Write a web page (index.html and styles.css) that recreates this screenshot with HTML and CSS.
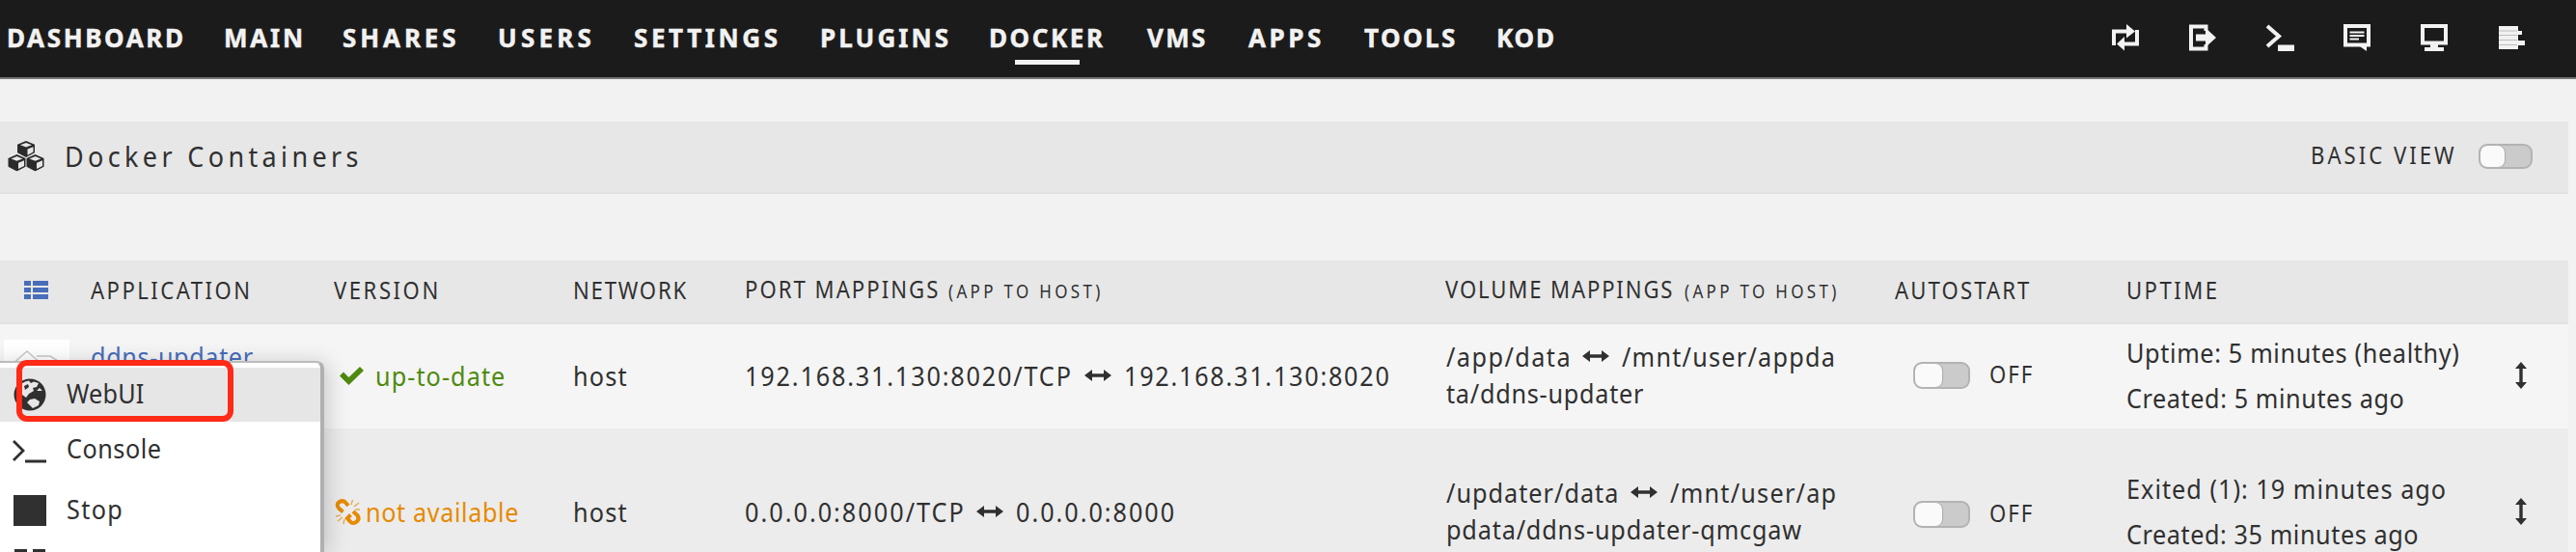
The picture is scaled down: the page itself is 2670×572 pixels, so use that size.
FILE: index.html
```html
<!DOCTYPE html>
<html lang="en">
<head>
<meta charset="utf-8">
<title>Docker</title>
<link rel="stylesheet" href="styles.css">
</head>
<body>
<svg class="defs" aria-hidden="true">
  <symbol id="lr" viewBox="0 0 28 12"><path d="M0 6L8 0V4.300H20V0L28 6L20 12V7.700H8V12Z"/></symbol>
  <symbol id="ud" viewBox="0 0 12 28"><path d="M6 0L12 7H7.700V21H12L6 28L0 21H4.300V7H0Z"/></symbol>
  <symbol id="cube" viewBox="0 0 19 18" preserveAspectRatio="none"><path d="M9.500 0L18.500 4V13L9.500 18L.5 13V4Z" fill="#2a2a2a"/><path d="M9.500 2L15.500 4.500L9.500 7L3.500 4.500Z" fill="#e7e7e7"/><path d="M11 9L17 6.500V12.300L11 15.500Z" fill="#e7e7e7"/></symbol>
</svg>

<header class="nav">
  <nav class="nav-links">
    <a class="n-dashboard">DASHBOARD</a><a class="n-main">MAIN</a><a class="n-shares">SHARES</a><a class="n-users">USERS</a><a class="n-settings">SETTINGS</a><a class="n-plugins">PLUGINS</a><a class="n-docker active">DOCKER</a><a class="n-vms">VMS</a><a class="n-apps">APPS</a><a class="n-tools">TOOLS</a><a class="n-kod">KOD</a>
  </nav>
  <div class="nav-icons">
    <svg viewBox="0 0 30 30"><g fill="none" stroke="#f2f2f2" stroke-width="4"><path d="M3 23V8.500H18"/><path d="M27 7V21.500H12"/></g><path d="M16 1L25 8.500L16 15.500ZM14 14V28.500L6 21.500Z" fill="#f2f2f2"/></svg>
    <svg viewBox="0 0 30 30"><path d="M18.500 8V3.500H3V26.500H18.500V22" fill="none" stroke="#f2f2f2" stroke-width="4"/><path d="M8 11.500H18V5L29 15L18 25V18.500H8Z" fill="#f2f2f2"/></svg>
    <svg viewBox="0 0 30 30"><path d="M2 3L14 13.500L2 24" fill="none" stroke="#f2f2f2" stroke-width="4"/><path d="M13 22.500H30V29H13Z" fill="#f2f2f2"/></svg>
    <svg viewBox="0 0 30 30"><path d="M3 3H27V22.500H3Z" fill="none" stroke="#f2f2f2" stroke-width="4"/><path d="M15 22H25V29Z" fill="#f2f2f2"/><path d="M7.500 9.500H22.500M7.500 13H22.500M7.500 16.500H17" fill="none" stroke="#f2f2f2" stroke-width="2"/></svg>
    <svg viewBox="0 0 30 30"><path d="M3 3H27V20.500H3Z" fill="none" stroke="#f2f2f2" stroke-width="4"/><path d="M11 22H19V25H25V29H5V25H11Z" fill="#f2f2f2"/></svg>
    <svg viewBox="0 0 30 30"><path d="M2 3H22V8H26V12H22V18H29V23H22V27H2Z" fill="#f2f2f2"/><path d="M2 8H21M2 12.500H21M2 17.500H21M2 22.500H21" stroke="#bdbdbd" stroke-width="1"/></svg>
  </div>
</header>

<main class="content">
  <section class="titlebar">
    <svg class="cubes" viewBox="0 0 38 32"><use href="#cube" x="9.500" y="0" width="19" height="17"/><use href="#cube" x="0" y="14" width="19" height="17.500"/><use href="#cube" x="19" y="14" width="19" height="17.500"/></svg>
    <h1 class="title">Docker Containers</h1>
    <div class="view"><span class="view-label">BASIC VIEW</span><span class="toggle view-toggle"></span></div>
  </section>

  <section class="table">
    <div class="row head">
      <div class="c-icon"><svg class="list" viewBox="0 0 25 19"><path d="M0 0H7V5H0ZM9 0H25V5H9ZM0 7H7V12H0ZM9 7H25V12H9ZM0 14H7V19H0ZM9 14H25V19H9Z" fill="#486dba"/></svg></div>
      <div class="h-app">APPLICATION</div>
      <div class="h-version">VERSION</div>
      <div class="h-network">NETWORK</div>
      <div class="h-pair"><span class="h-port">PORT MAPPINGS</span><small>(APP TO HOST)</small></div>
      <div class="h-pair"><span class="h-volume">VOLUME MAPPINGS</span><small>(APP TO HOST)</small></div>
      <div class="h-auto">AUTOSTART</div>
      <div class="h-uptime">UPTIME</div>
      <div></div>
    </div>

    <div class="row first">
      <div class="c-icon c-thumb"><svg class="thumb" viewBox="0 0 68 68"><path d="M0 0H68V68H0Z" fill="#fff"/><path d="M8 26L24 12L40 26M34 17H48L56 22" fill="none" stroke="#c9c9c9" stroke-width="1.500"/></svg></div>
      <div class="c-name">ddns-updater</div>
      <div class="ok"><svg class="check" viewBox="0 0 25 19"><path d="M0 9.500L4 5.500L9.500 11L21 0L25 4L9.500 19Z" fill="#4f8a10"/></svg><span class="t-ok">up-to-date</span></div>
      <div class="t-host">host</div>
      <div class="map"><span class="t-port1">192.168.31.130:8020/TCP</span><svg class="lr"><use href="#lr"/></svg><span class="t-port2">192.168.31.130:8020</span></div>
      <div class="vol"><div class="map"><span class="t-v1">/app/data</span><svg class="lr"><use href="#lr"/></svg><span class="t-v2">/mnt/user/appda</span></div><div class="t-v3">ta/ddns-updater</div></div>
      <div class="auto"><span class="toggle"></span><span class="off">OFF</span></div>
      <div class="up"><div class="t-u1">Uptime: 5 minutes (healthy)</div><div class="t-u2">Created: 5 minutes ago</div></div>
      <div class="move"><svg class="ud"><use href="#ud"/></svg></div>
    </div>

    <div class="row second">
      <div class="c-icon"></div>
      <div></div>
      <div class="warn"><svg class="chain" viewBox="0 0 27 27"><g fill="none" stroke="#e68a00" stroke-width="4"><path d="M8.500 13.500L4 9.500C0 5 6 .5 10.500 3L14 7"/><path d="M19 13L23.500 17C27 22 20.500 27 16.500 24L13 20L16.500 16.500"/></g><path d="M17 6L18.500 1M20 8L25 4M21 11H26M6 17L1 18M8 19L3 23M10 21L9 26" stroke="#e68a00" stroke-width="1.400" opacity=".65"/></svg><span class="t-warn">not available</span></div>
      <div class="t-host">host</div>
      <div class="map"><span class="t-port3">0.0.0.0:8000/TCP</span><svg class="lr"><use href="#lr"/></svg><span class="t-port4">0.0.0.0:8000</span></div>
      <div class="vol"><div class="map"><span class="t-v4">/updater/data</span><svg class="lr"><use href="#lr"/></svg><span class="t-v5">/mnt/user/ap</span></div><div class="t-v6">pdata/ddns-updater-qmcgaw</div></div>
      <div class="auto"><span class="toggle"></span><span class="off">OFF</span></div>
      <div class="up"><div class="t-u3">Exited (1): 19 minutes ago</div><div class="t-u4">Created: 35 minutes ago</div></div>
      <div class="move"><svg class="ud"><use href="#ud"/></svg></div>
    </div>
  </section>
</main>

<div class="menu">
  <div class="item current"><svg viewBox="0 0 34 34"><circle cx="17" cy="17" r="16.500" fill="#303030"/><path d="M5 10C8 5 12 3 16 2.500L18 5L21 3.500L26 5L24 9L20 10L21 13L16 16L13 20L9 17L5 16ZM17 22L22 21L27 24L26 28L20 31L17 28L14 25ZM24 13L27 10L30 13Z" fill="#e6e6e6"/><path d="M11 8L15 6L16 9L12 12Z" fill="#303030"/></svg><span class="m-web">WebUI</span></div>
  <div class="item console"><svg viewBox="0 0 34 34"><path d="M0 6L10 16L0 26" fill="none" stroke="#303030" stroke-width="2.800"/><path d="M12 27H34" stroke="#303030" stroke-width="3"/></svg><span class="m-con">Console</span></div>
  <div class="item stop"><svg viewBox="0 0 34 34"><path d="M0 1H34V33H0Z" fill="#303030"/></svg><span class="m-stop">Stop</span></div>
  <div class="item pause"><svg viewBox="0 0 34 34"><path d="M1 0H14V34H1ZM20 0H33V34H20Z" fill="#303030"/></svg></div>
</div>
<div class="marker"></div>
</body>
</html>
```
FILE: styles.css
```css
* { box-sizing: border-box; }
body {
  margin: 0;
  height: 572px;
  overflow: hidden;
  position: relative;
  background: #f2f2f2;
  color: #303030;
  font: 28px/38px "Noto Sans", "Open Sans", sans-serif;
  white-space: nowrap;
}
.defs { display: none; }
svg { display: block; flex: none; overflow: visible; }
.lr, .ud { fill: #303030; }

/* Condensed lettering */
.c-name, .t-host, .t-ok, .t-warn, .map span, .t-v3, .t-v6,
.up div, .item span {
  display: block;
  transform: scaleX(.9);
  transform-origin: 0 50%;
}
.view-label, .off, .h-app, .h-version, .h-network, .h-pair span,
.h-pair small, .h-auto, .h-uptime {
  display: block;
  transform: scaleX(.85);
  transform-origin: 0 50%;
}

.nav {
  display: flex;
  justify-content: space-between;
  height: 82px;
  background: #1c1b1b;
  border-bottom: 2px solid #787676;
  color: #f2f2f2;
  font-size: 26px;
  font-weight: 700;
  -webkit-text-stroke: .5px #f2f2f2;
}
.nav-links { display: flex; padding: 20px 0 0 7px; }
.nav-links a { display: block; }
.n-dashboard { width: 225px; letter-spacing: 2.610px; }
.n-main { width: 123px; letter-spacing: 2.790px; }
.n-shares { width: 161px; letter-spacing: 3.900px; }
.n-users { width: 141px; letter-spacing: 4.250px; }
.n-settings { width: 193px; letter-spacing: 3.600px; }
.n-plugins { width: 175px; letter-spacing: 3.100px; }
.n-docker { width: 164px; letter-spacing: 2.580px; }
.n-vms { width: 105px; letter-spacing: 2.290px; }
.n-apps { width: 120px; letter-spacing: 3.570px; }
.n-tools { width: 137px; letter-spacing: 2.460px; }
.n-kod { width: 60px; letter-spacing: 1.840px; }
.active::after {
  content: "";
  display: block;
  width: 67px;
  height: 5px;
  margin: 4px 0 0 27px;
  background: #f2f2f2;
}
.nav-icons { display: flex; gap: 50px; padding: 24px 52px 0 0; }
.nav-icons svg { width: 30px; height: 30px; }

.content { height: 490px; padding: 44px 8px 0 0; overflow: hidden; }
.titlebar {
  display: flex;
  align-items: center;
  height: 75px;
  padding: 0 37px 2px 8px;
  margin-bottom: 69px;
  background: #e7e7e7;
  border-bottom: 2px solid #e2e2e2;
}
.cubes { width: 38px; height: 32px; }
.title {
  margin: 0 auto 0 21px;
  font-size: 29px;
  font-weight: 400;
  letter-spacing: 4.700px;
  transform: scaleX(.93);
  transform-origin: 0 50%;
}
.view { display: flex; align-items: center; }
.view-label { width: 174px; font-size: 26px; letter-spacing: 3.550px; margin-top: -3px; }
.toggle {
  width: 59px;
  height: 28px;
  border: 2px solid #b3b3b3;
  border-radius: 9px;
  background: #cbcbcb;
  overflow: hidden;
}
.toggle::before {
  content: "";
  display: block;
  width: 28px;
  height: 24px;
  border-radius: 7px;
  background: #fafafa;
  box-shadow: 1px 0 1px #aaa;
}
.view-toggle { width: 56px; height: 26px; }
.view-toggle::before { width: 25px; height: 22px; }

.row {
  display: grid;
  grid-template-columns: 94px 252px 248px 178px 726px 466px 240px 401px 57px;
  align-items: center;
}
.head {
  height: 66px;
  padding-bottom: 4px;
  background: #e7e7e7;
  border-bottom: 2px solid #e2e2e2;
  font-size: 26px;
}
.c-icon { padding-left: 25px; }
.list { width: 25px; height: 19px; }
.h-pair { display: flex; align-items: baseline; }
.head small { font-size: 20px; letter-spacing: 3.900px; }
.h-app { letter-spacing: 2.900px; }
.h-version { letter-spacing: 2.980px; }
.h-network { letter-spacing: 2.100px; }
.h-port { width: 211px; letter-spacing: 2.400px; }
.h-volume { width: 248px; letter-spacing: 2.200px; }
.h-auto { letter-spacing: 2.500px; }
.h-uptime { letter-spacing: 2.900px; }

.first { height: 108px; padding-bottom: 2px; background: #f5f5f5; }
.second { height: 173px; padding-bottom: 1px; background: #ececec; }
.c-thumb { align-self: start; padding: 16px 0 0 4px; }
.thumb { width: 68px; height: 68px; }
.c-name {
  align-self: start;
  padding-top: 14px;
  color: #486dba;
  letter-spacing: .7px;
}
.ok, .warn, .map, .auto { display: flex; align-items: center; }
.ok { color: #4f8a10; padding-left: 6px; }
.check { width: 25px; height: 19px; }
.t-ok { margin-left: 12px; letter-spacing: 1.200px; }
.warn { color: #e68a00; padding-left: 1px; }
.chain { width: 27px; height: 27px; }
.t-warn { margin-left: 5px; letter-spacing: .7px; }
.t-host { letter-spacing: 1.300px; }
.lr { width: 28px; height: 12px; margin-right: 13px; }
.t-port1 { width: 352px; letter-spacing: 2.050px; }
.t-port2 { letter-spacing: 1.950px; }
.t-port3 { width: 240px; letter-spacing: 2.250px; }
.t-port4 { letter-spacing: 2.200px; }
.vol { padding-left: 1px; margin-top: -2px; }
.t-v1 { width: 141px; letter-spacing: 1.640px; }
.t-v2 { letter-spacing: 1.380px; }
.t-v3 { letter-spacing: .84px; }
.t-v4 { width: 191px; letter-spacing: 1.140px; }
.t-v5 { letter-spacing: 1.400px; }
.t-v6 { letter-spacing: .95px; }
.auto { padding-left: 19px; }
.second .auto { padding-top: 6px; }
.off { font-size: 26px; letter-spacing: 2.300px; margin: -4px 0 0 20px; }
.up { line-height: 47px; }
.t-u1 { letter-spacing: .73px; }
.t-u2 { letter-spacing: .66px; }
.t-u3 { letter-spacing: 1.140px; }
.t-u4 { letter-spacing: .65px; }
.move { padding-left: 2px; }
.ud { width: 12px; height: 28px; }

.menu {
  position: absolute;
  left: -10px;
  top: 374px;
  width: 346px;
  height: 198px;
  padding-top: 5px;
  background: #fff;
  border: 2px solid #bbb;
  border-right: 4px solid #b0b0b0;
  border-bottom: 0;
  border-radius: 8px 8px 0 0;
  box-shadow: 4px 2px 22px rgba(0, 0, 0, .18);
  overflow: hidden;
}
.item { display: flex; align-items: center; padding-left: 22px; }
.item svg { width: 34px; height: 34px; }
.item span { margin-left: 21px; }
.current { height: 56px; background: #e6e6e6; }
.current span { margin-top: -4px; }
.console { height: 62px; }
.console span { margin-top: -9px; }
.stop { height: 62px; padding-bottom: 2px; }
.stop span { margin-top: -5px; }
.pause { align-items: flex-start; padding-top: 8px; }
.m-web { letter-spacing: .2px; }
.m-con { letter-spacing: .6px; }
.m-stop { letter-spacing: 1.500px; }
.marker {
  position: absolute;
  left: 17px;
  top: 373px;
  width: 225px;
  height: 64px;
  border: 6px solid #ff2a18;
  border-radius: 11px;
}
```
